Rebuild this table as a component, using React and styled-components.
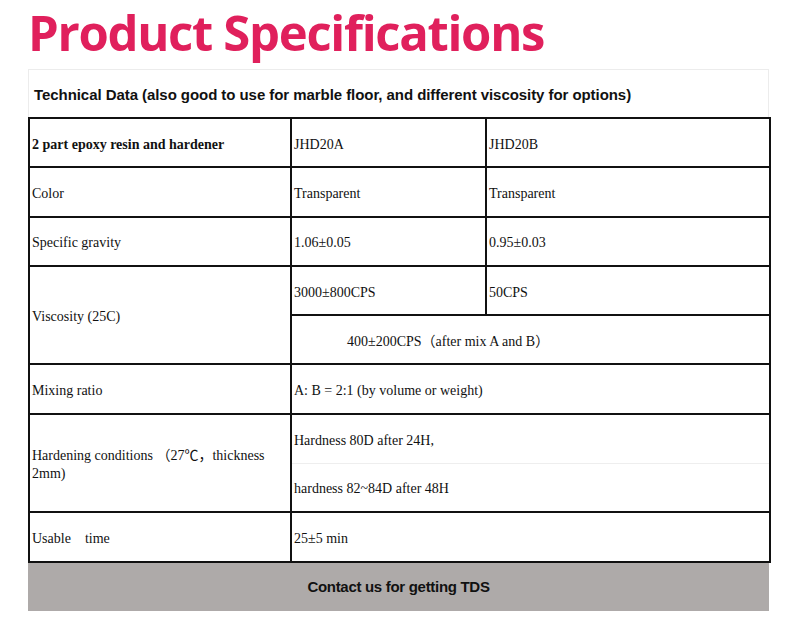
import React from "react";
import styled, { createGlobalStyle } from "styled-components";

const Global = createGlobalStyle`
  html, body { margin: 0; padding: 0; background: #fff; }
  body { font-family: "Liberation Serif", "Times New Roman", serif; }
`;

const Page = styled.div`
  width: 799px;
  padding: 0 30px 0 28px;
  box-sizing: border-box;
`;

const Title = styled.h1`
  margin: 0;
  height: 69px;
  font-family: "Open Sans", "Noto Sans", sans-serif;
  font-weight: 700;
  font-size: 49px;
  line-height: 64px;
  color: #e0205c;
  letter-spacing: -1.3px;
  white-space: nowrap;
`;

const Caption = styled.div`
  height: 48px;
  box-sizing: border-box;
  border: 1px solid #ececec;
  border-bottom: none;
  display: flex;
  align-items: center;
  padding: 2px 5px 0;
  font-family: "Liberation Sans", Arial, sans-serif;
  font-weight: 700;
  font-size: 15px;
  letter-spacing: -0.06px;
  color: #111;
`;

const Table = styled.table`
  width: 741px;
  border-collapse: collapse;
  table-layout: fixed;
  font-family: "Liberation Serif", "Times New Roman", "Noto Sans CJK SC", serif;
  font-size: 14px;
  color: #111;
`;

const Row = styled.tr`
  height: 49.3px;
`;

const Cell = styled.td`
  border: 2px solid #111;
  ${(p) => p.$softBottom && "border-bottom: 1px solid #eeeeee;"}
  ${(p) => p.$softTop && "border-top: 1px solid #eeeeee;"}
  padding: 4px 2px 0;
  vertical-align: middle;
  font-weight: ${(p) => (p.$bold ? 700 : 400)};
  padding-left: ${(p) => p.$indent || 2}px;
  white-space: pre-wrap;
  line-height: 18px;
`;

const Footer = styled.div`
  height: 48px;
  background: #aeaaa9;
  display: flex;
  align-items: center;
  justify-content: center;
  font-family: "Liberation Sans", Arial, sans-serif;
  font-weight: 700;
  font-size: 15px;
  letter-spacing: -0.3px;
  color: #111;
`;

export default function App() {
  return (
    <Page>
      <Global />
      <Title>Product Specifications</Title>
      <Caption>
        Technical Data (also good to use for marble floor, and different viscosity for options)
      </Caption>
      <Table>
        <colgroup>
          <col style={{ width: 262 }} />
          <col style={{ width: 195 }} />
          <col style={{ width: 284 }} />
        </colgroup>
        <tbody>
          <Row>
            <Cell $bold>2 part epoxy resin and hardener</Cell>
            <Cell>JHD20A</Cell>
            <Cell>JHD20B</Cell>
          </Row>
          <Row>
            <Cell>Color</Cell>
            <Cell>Transparent</Cell>
            <Cell>Transparent</Cell>
          </Row>
          <Row>
            <Cell>Specific gravity</Cell>
            <Cell>1.06±0.05</Cell>
            <Cell>0.95±0.03</Cell>
          </Row>
          <Row>
            <Cell rowSpan={2}>Viscosity (25C)</Cell>
            <Cell>3000±800CPS</Cell>
            <Cell>50CPS</Cell>
          </Row>
          <Row>
            <Cell colSpan={2} $indent={55}>400±200CPS（after mix A and B）</Cell>
          </Row>
          <Row>
            <Cell>Mixing ratio</Cell>
            <Cell colSpan={2}>A: B = 2:1 (by volume or weight)</Cell>
          </Row>
          <Row>
            <Cell rowSpan={2}>Hardening conditions （27℃，thickness 2mm)</Cell>
            <Cell colSpan={2} $softBottom>Hardness 80D after 24H,</Cell>
          </Row>
          <Row>
            <Cell colSpan={2} $softTop>hardness 82~84D after 48H</Cell>
          </Row>
          <Row>
            <Cell>{"Usable    time"}</Cell>
            <Cell colSpan={2}>25±5 min</Cell>
          </Row>
        </tbody>
      </Table>
      <Footer>Contact us for getting TDS</Footer>
    </Page>
  );
}
